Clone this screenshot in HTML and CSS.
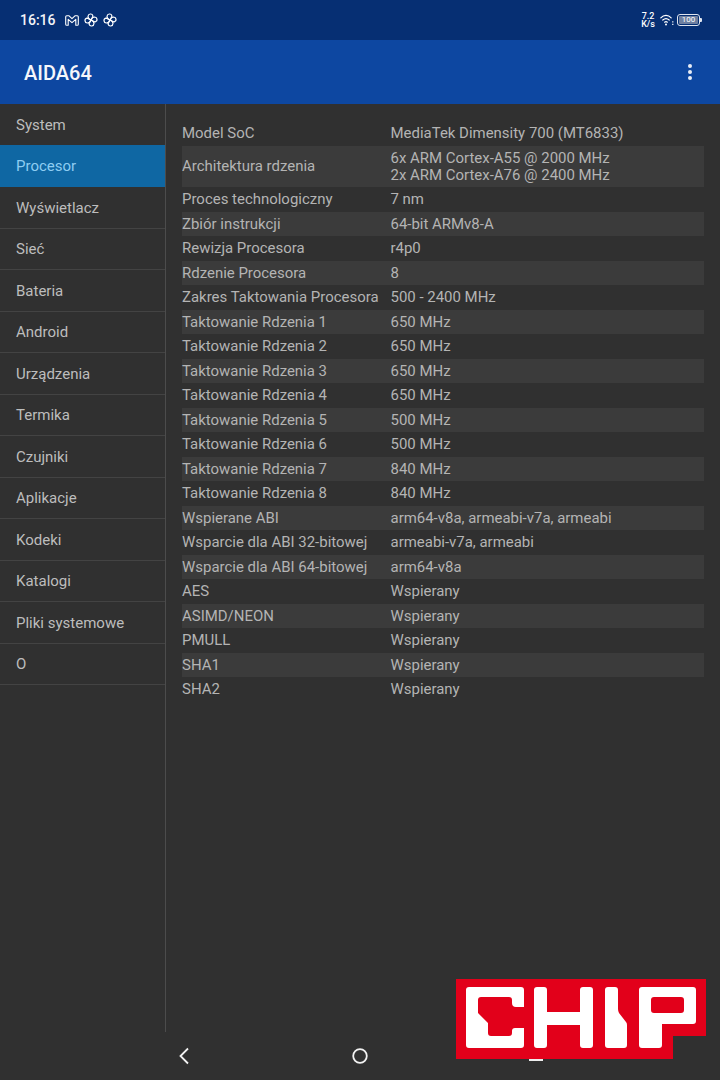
FILE: index.html
```html
<!DOCTYPE html>
<html lang="pl">
<head>
<meta charset="utf-8">
<title>AIDA64</title>
<link rel="stylesheet" href="styles.css">
</head>
<body>
<div class="screen">
  <header class="status">
    <div class="status-left">
      <span class="time">16:16</span>
      <svg class="ic-m" viewBox="0 0 14 11"><path d="M1.800.7H3.800L7 3.600 10.200.7H12.200Q13.300.7 13.300 1.800V9.200Q13.300 10.300 12.200 10.300H10.800V4.300L7 7.700 3.200 4.300V10.300H1.800Q.7 10.300.7 9.200V1.800Q.7.700 1.800.7Z" fill="none" stroke="#fff" stroke-width="1.100" stroke-linejoin="round"/></svg>
      <svg class="ic-f" viewBox="0 0 14 14"><g fill="none" stroke="#fff" stroke-width="1.200" stroke-linejoin="round"><path d="M7 7C5.200 6.400 4 5.200 4 3.400A2.500 2.500 0 0 1 8.900 2.800C9 4.400 7.800 5.400 7 7Z"/><path d="M7 7C5.200 6.400 4 5.200 4 3.400A2.500 2.500 0 0 1 8.900 2.800C9 4.400 7.800 5.400 7 7Z" transform="rotate(90 7 7)"/><path d="M7 7C5.200 6.400 4 5.200 4 3.400A2.500 2.500 0 0 1 8.900 2.800C9 4.400 7.800 5.400 7 7Z" transform="rotate(180 7 7)"/><path d="M7 7C5.200 6.400 4 5.200 4 3.400A2.500 2.500 0 0 1 8.900 2.800C9 4.400 7.800 5.400 7 7Z" transform="rotate(270 7 7)"/></g></svg>
      <svg class="ic-f" viewBox="0 0 14 14"><g fill="none" stroke="#fff" stroke-width="1.200" stroke-linejoin="round"><path d="M7 7C5.200 6.400 4 5.200 4 3.400A2.500 2.500 0 0 1 8.900 2.800C9 4.400 7.800 5.400 7 7Z"/><path d="M7 7C5.200 6.400 4 5.200 4 3.400A2.500 2.500 0 0 1 8.900 2.800C9 4.400 7.800 5.400 7 7Z" transform="rotate(90 7 7)"/><path d="M7 7C5.200 6.400 4 5.200 4 3.400A2.500 2.500 0 0 1 8.900 2.800C9 4.400 7.800 5.400 7 7Z" transform="rotate(180 7 7)"/><path d="M7 7C5.200 6.400 4 5.200 4 3.400A2.500 2.500 0 0 1 8.900 2.800C9 4.400 7.800 5.400 7 7Z" transform="rotate(270 7 7)"/></g></svg>
    </div>
    <div class="status-right">
      <span class="speed">7.2<br>K/s</span>
      <svg class="ic-wifi" viewBox="0 0 14 12"><g fill="none" stroke="#fff" stroke-width="1.200" stroke-linecap="round"><path d="M.8 3.800C3.800.6 8.200.6 11.200 3.800"/><path d="M2.800 6C4.800 4.200 7.200 4.200 9.200 6"/><path d="M4.600 8.200c.9-.8 1.900-.8 2.800 0"/></g><circle cx="6" cy="10.500" r="1" fill="#fff"/><path d="M12.800 7.200v1.200M12.800 9.800V11" stroke="#fff" stroke-width="1.200"/></svg>
      <span class="battery"><span class="battery-fill">100</span></span>
    </div>
  </header>
  <div class="appbar">
    <h1 class="title">AIDA64</h1>
    <div class="kebab"><i></i><i></i><i></i></div>
  </div>
  <main class="body">
    <nav class="menu">
      <div class="menu-item">System</div>
      <div class="menu-item active">Procesor</div>
      <div class="menu-item">Wyświetlacz</div>
      <div class="menu-item">Sieć</div>
      <div class="menu-item">Bateria</div>
      <div class="menu-item">Android</div>
      <div class="menu-item">Urządzenia</div>
      <div class="menu-item">Termika</div>
      <div class="menu-item">Czujniki</div>
      <div class="menu-item">Aplikacje</div>
      <div class="menu-item">Kodeki</div>
      <div class="menu-item">Katalogi</div>
      <div class="menu-item">Pliki systemowe</div>
      <div class="menu-item">O</div>
    </nav>
    <section class="table">
      <div class="row"><span>Model SoC</span><span>MediaTek Dimensity 700 (MT6833)</span></div>
      <div class="row tall"><span>Architektura rdzenia</span><span class="tall-value">6x ARM Cortex-A55 @ 2000 MHz<br>2x ARM Cortex-A76 @ 2400 MHz</span></div>
      <div class="row"><span>Proces technologiczny</span><span>7 nm</span></div>
      <div class="row"><span>Zbiór instrukcji</span><span>64-bit ARMv8-A</span></div>
      <div class="row"><span>Rewizja Procesora</span><span>r4p0</span></div>
      <div class="row"><span>Rdzenie Procesora</span><span>8</span></div>
      <div class="row"><span>Zakres Taktowania Procesora</span><span>500 - 2400 MHz</span></div>
      <div class="row"><span>Taktowanie Rdzenia 1</span><span>650 MHz</span></div>
      <div class="row"><span>Taktowanie Rdzenia 2</span><span>650 MHz</span></div>
      <div class="row"><span>Taktowanie Rdzenia 3</span><span>650 MHz</span></div>
      <div class="row"><span>Taktowanie Rdzenia 4</span><span>650 MHz</span></div>
      <div class="row"><span>Taktowanie Rdzenia 5</span><span>500 MHz</span></div>
      <div class="row"><span>Taktowanie Rdzenia 6</span><span>500 MHz</span></div>
      <div class="row"><span>Taktowanie Rdzenia 7</span><span>840 MHz</span></div>
      <div class="row"><span>Taktowanie Rdzenia 8</span><span>840 MHz</span></div>
      <div class="row"><span>Wspierane ABI</span><span>arm64-v8a, armeabi-v7a, armeabi</span></div>
      <div class="row"><span>Wsparcie dla ABI 32-bitowej</span><span>armeabi-v7a, armeabi</span></div>
      <div class="row"><span>Wsparcie dla ABI 64-bitowej</span><span>arm64-v8a</span></div>
      <div class="row"><span>AES</span><span>Wspierany</span></div>
      <div class="row"><span>ASIMD/NEON</span><span>Wspierany</span></div>
      <div class="row"><span>PMULL</span><span>Wspierany</span></div>
      <div class="row"><span>SHA1</span><span>Wspierany</span></div>
      <div class="row"><span>SHA2</span><span>Wspierany</span></div>
    </section>
  </main>
  <footer class="navbar">
    <svg class="nav-back" viewBox="0 0 12 18"><path d="M10 1.500 2.500 9l7.500 7.500" fill="none" stroke="#f2f2f2" stroke-width="1.800"/></svg>
    <svg class="nav-home" viewBox="0 0 16 16"><circle cx="8" cy="8" r="6.800" fill="none" stroke="#f2f2f2" stroke-width="1.800"/></svg>
    <span class="nav-recent"></span>
  </footer>
  <svg class="chip" viewBox="0 0 250 80" role="img" aria-label="CHIP logo">
    <path fill="#e2001a" d="M0 0H250V57H217V80H0Z"/>
    <path fill="#fff" d="M13 8H65Q68 8 68 11V28H60Q56 28 56 24V21Q56 18 53 18H25Q22 18 22 21V34L32 44V54Q32 57 35 57H53Q56 57 56 54V52Q56 49 59 49H68V66Q68 69 65 69H13Q10 69 10 66V11Q10 8 13 8Z"/>
    <path fill="#fff" d="M81 8H88Q91 8 91 11V33H124V11Q124 8 127 8H134Q137 8 137 11V66Q137 69 134 69H127Q124 69 124 66V46H91V66Q91 69 88 69H81Q78 69 78 66V11Q78 8 81 8Z"/>
    <path fill="#fff" d="M152 8H159Q162 8 162 11V30Q162 32 163 34L170 43Q171 44 171 46V66Q171 69 168 69H152Q149 69 149 66V11Q149 8 152 8Z"/>
    <path fill="#fff" fill-rule="evenodd" d="M186 8H237Q240 8 240 11V42Q240 45 237 45H206V66Q206 69 203 69H186Q183 69 183 66V11Q183 8 186 8ZM198 18Q195 18 195 21V31Q195 34 198 34H225Q228 34 228 31V21Q228 18 225 18Z"/>
  </svg>
</div>
</body>
</html>
```

FILE: styles.css
```css
* { box-sizing: border-box; }
html, body { margin: 0; padding: 0; }
body { background: #303030; font-family: Roboto, "Liberation Sans", sans-serif; }
.screen { position: relative; width: 720px; height: 1080px; overflow: hidden; display: flex; flex-direction: column; background: #303030; }

.status { height: 40px; flex: none; background: #062f73; color: #fff; display: flex; align-items: center; justify-content: space-between; padding: 0 20px; }
.status-left, .status-right { display: flex; align-items: center; }
.time { font-size: 14px; font-weight: 500; color: #f2f4f8; width: 45px; }
.ic-m { width: 14px; height: 11px; margin-right: 5px; }
.ic-f { width: 14px; height: 14px; margin-right: 5px; }
.speed { font-size: 9px; line-height: 8px; font-weight: 500; text-align: center; margin-right: 5px; }
.ic-wifi { width: 14px; height: 12px; margin-right: 3px; }
.battery { width: 23px; height: 12px; border: 1px solid #dfe5ef; border-radius: 3px; padding: 1px; position: relative; display: flex; }
.battery::after { content: ""; position: absolute; right: -3px; top: 3px; width: 2px; height: 4px; background: #dfe5ef; border-radius: 0 1px 1px 0; }
.battery-fill { flex: 1; background: #6d7fa0; border-radius: 1px; font-size: 8px; line-height: 8px; text-align: center; color: #fff; }

.appbar { height: 64px; flex: none; background: #0d47a1; color: #fff; display: flex; align-items: center; justify-content: space-between; padding: 2px 28px 0 24px; position: relative; }
.title { margin: 0; font-size: 20px; font-weight: 500; color: #f5f7fb; }
.kebab { display: flex; flex-direction: column; gap: 2px; margin-top: -2px; }
.kebab i { width: 4px; height: 4px; border-radius: 50%; background: #e8edf6; display: block; }

.body { flex: 1; min-height: 0; display: flex; }
.menu { width: 166px; flex: none; height: 928px; border-right: 1px solid #4c4c4c; }
.menu-item { height: 41.500px; padding: 1px 0 0 16px; display: flex; align-items: center; font-size: 15px; color: #bdbdbd; border-bottom: 1px solid #434343; }
.menu-item.active { background: #0f67a3; color: #8ecdf2; border-bottom-color: #0f67a3; box-shadow: 0 -1px 0 #0f67a3; }

.table { flex: 1; padding: 17px 16px 0 16px; font-size: 14.960px; line-height: 24.500px; color: #b4b4b4; }
.row { display: grid; grid-template-columns: 208.500px 1fr; }
.row:nth-child(even) { background: #3b3b3b; }
.tall { line-height: 17px; height: 41.800px; align-items: center; }
.tall-value { padding-top: 1px; }

.navbar { height: 48px; flex: none; display: flex; align-items: center; position: relative; }
.nav-back { position: absolute; left: 178px; top: 15px; width: 12px; height: 18px; }
.nav-home { position: absolute; left: 352px; top: 16px; width: 16px; height: 16px; }
.nav-recent { position: absolute; left: 529px; top: 27px; width: 14px; height: 2px; background: #eee; }

.chip { position: absolute; left: 456px; top: 979px; width: 250px; height: 80px; }
```
